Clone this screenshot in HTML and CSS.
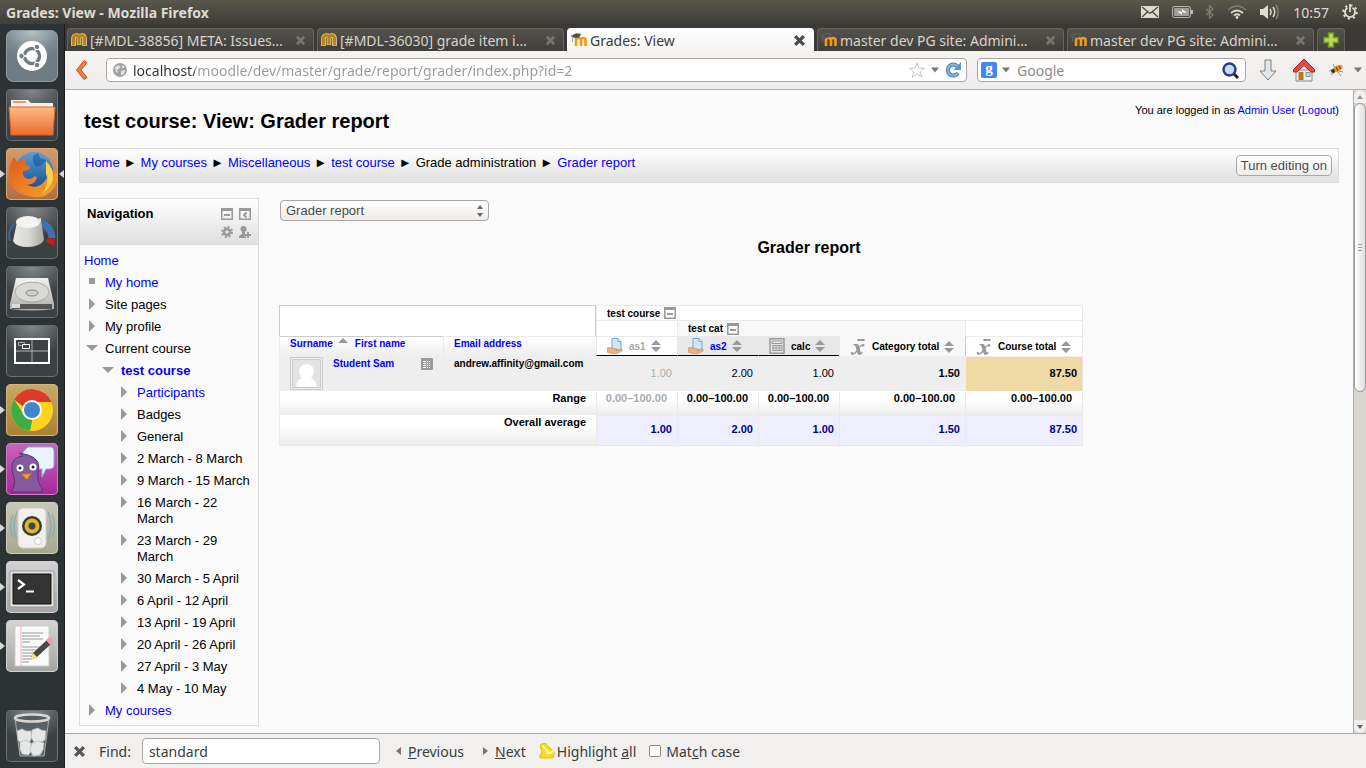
FILE: index.html
```html
<!DOCTYPE html>
<html lang="en">
<head>
  <meta charset="UTF-8" />
  <meta name="viewport" content="width=device-width, initial-scale=1.0" />
  <title>Grades: View</title>
  <link rel="stylesheet" href="styles.css">
</head>
<body>
  <!-- shared icons -->
  <svg class="defs" aria-hidden="true">
    <defs>
      <linearGradient id="gOrange" x1="0" y1="0" x2="0" y2="1"><stop offset="0" stop-color="#f9bd85"/><stop offset="1" stop-color="#ea6a2c"/></linearGradient>
      <linearGradient id="gBlue" x1="0" y1="0" x2="0" y2="1"><stop offset="0" stop-color="#5aa0da"/><stop offset="1" stop-color="#164a8c"/></linearGradient>
      <linearGradient id="gGrey" x1="0" y1="0" x2="0" y2="1"><stop offset="0" stop-color="#f2f2f0"/><stop offset="1" stop-color="#aaaaa8"/></linearGradient>
      <linearGradient id="gKnob" x1="0" y1="0" x2="1" y2="0"><stop offset="0" stop-color="#e8e8e2"/><stop offset=".5" stop-color="#d8d9d2"/><stop offset="1" stop-color="#a8aaa2"/></linearGradient>
      <linearGradient id="gFire" x1="0" y1="0" x2="1" y2="1"><stop offset="0" stop-color="#e2591c"/><stop offset="1" stop-color="#f4a52c"/></linearGradient>
      <symbol id="close" viewBox="0 0 12 12"><path d="M2 2l8 8M10 2l-8 8" stroke="currentColor" stroke-width="3" fill="none"/></symbol>
      <symbol id="moodle-old" viewBox="0 0 16 14"><path d="M2.500 13V5.500Q2.500 2.500 5.200 2.500T8 5.500V12M8 5.500Q8 2.500 10.700 2.500T13.500 5.500V13" fill="none" stroke="#f3cfa6" stroke-width="4.600"/><path d="M2.500 12.500V5.500Q2.500 2.500 5.200 2.500T8 5.500V11.500M8 5.500Q8 2.500 10.700 2.500T13.500 5.500V12.500" fill="none" stroke="#b8860b" stroke-width="3"/></symbol>
      <symbol id="moodle" viewBox="0 0 16 14"><path d="M5 13V7q0-2 2.300-2T10 7v6M10 7q0-2 2.300-2T14.500 7v6" fill="none" stroke="#f59b11" stroke-width="2.600"/><path d="M0 3l5-2.500 5 .5-2 3.500-4 .5zM1.500 4v5" fill="#4c4c4c" stroke="#777" stroke-width=".6"/></symbol>
      <symbol id="collapsed" viewBox="0 0 8 12"><path d="M1 0l6 6-6 6z" fill="#999"/></symbol>
      <symbol id="expanded" viewBox="0 0 12 8"><path d="M0 1h12L6 7z" fill="#999"/></symbol>
      <symbol id="minus" viewBox="0 0 12 12"><path d="M.75 1.500h10.500v9.750H.75z" fill="none" stroke="#999" stroke-width="1.500"/><path d="M0 0h12v3H0zM3 6h6v2H3z" fill="#999"/></symbol>
      <symbol id="dock" viewBox="0 0 12 12"><path d="M.75 1.500h10.500v9.750H.75z" fill="none" stroke="#999" stroke-width="1.500"/><path d="M0 0h12v3H0z" fill="#999"/><path d="M7.500 4.500L5 7l2.500 2.500" fill="none" stroke="#999" stroke-width="1.800"/></symbol>
      <symbol id="sort" viewBox="0 0 10 12"><path d="M5 0l5 5H0zM0 7h10l-5 5z" fill="#999"/></symbol>
      <symbol id="assign" viewBox="0 0 16 16"><path d="M5 .5h6l3 3V12H5z" fill="#cfe6fb" stroke="#6fa8dc"/><path d="M11 .5v3h3" fill="#fff" stroke="#6fa8dc"/><path d="M0 10q3-1 5 0l5 1q1 1-1 1.500l5-1.500q2 0 1 2l-5 2.500H5L0 14z" fill="#e9b184" stroke="#c98a56" stroke-width=".6"/></symbol>
      <symbol id="calc" viewBox="0 0 16 16"><path d="M1 .75h14v14.500H1z" fill="none" stroke="#999" stroke-width="1.500"/><path d="M3 3h10v2.500H3z" fill="none" stroke="#999"/><path d="M3 7.500h10M3 10h10M3 12.500h10M4 7v6M7 7v6M10 7v6M13 7v6" stroke="#999"/></symbol>
      <symbol id="mean" viewBox="0 0 15 16"><path d="M7 0h7v2H7z" fill="#999"/><path d="M3 5h3.500q1.500 0 2 2l1.500 5.500q.5 1.500 2 .5l.5.700Q10.500 16 9 16q-1.500 0-2-1.500L5 7.500Q4.500 6 3 6z" fill="#999"/><path d="M12.500 6.500q-2-1-4.500 3l-2 3Q3.500 16 1.500 14.500" fill="none" stroke="#999" stroke-width="1.300"/><circle cx="12.500" cy="6.300" r="1.400" fill="#999"/><circle cx="1.600" cy="14.400" r="1.400" fill="#999"/></symbol>
    </defs>
  </svg>

  <header class="panel">
    <span class="window-title">Grades: View - Mozilla Firefox</span>
    <div class="indicators">
      <svg class="i-mail" viewBox="0 0 18 12"><path d="M0 0h18v12H0z" fill="#dfdbd2"/><path d="M1 1l8 6.500L17 1M1 11l5.500-5M17 11l-5.500-5" fill="none" stroke="#45433d" stroke-width="1.200"/></svg>
      <svg class="i-battery" viewBox="0 0 21 12"><rect x=".5" y=".5" width="18" height="11" rx="2" fill="none" stroke="#bdb9b0"/><path d="M2 2h15v8H2z" fill="#a09d96"/><path d="M19 4h2v4h-2z" fill="#bdb9b0"/><path d="M5 5l5 1V3l5 4-5-1v3z" fill="#fff"/></svg>
      <svg class="i-bluetooth" viewBox="0 0 8 14"><path d="M0 4l7 6-3.500 3.500V.5L7 4 0 10" fill="none" stroke="#858178" stroke-width="1.200"/></svg>
      <svg class="i-wifi" viewBox="0 0 20 14"><path d="M1 5q9-8 18 0" fill="none" stroke="#858178" stroke-width="1.600"/><path d="M4 8q6-5 12 0M7 10.500q3-2.500 6 0" fill="none" stroke="#dfdbd2" stroke-width="1.700"/><circle cx="10" cy="12.500" r="1.400" fill="#dfdbd2"/></svg>
      <svg class="i-sound" viewBox="0 0 20 16"><path d="M0 5h3l5-4v14l-5-4H0z" fill="#dfdbd2"/><path d="M10 5q2 3 0 6M13 3q3.500 5 0 10" fill="none" stroke="#dfdbd2" stroke-width="1.500"/><path d="M16 1q4.500 7 0 14" fill="none" stroke="#858178" stroke-width="1.500"/></svg>
      <time>10:57</time>
      <svg class="i-gear" viewBox="0 0 16 16"><circle cx="8" cy="8" r="6.700" fill="none" stroke="#dfdbd2" stroke-width="2.200" stroke-dasharray="2.200 3.060"/><path d="M5.500 3.700a5 5 0 1 0 5 0" fill="none" stroke="#dfdbd2" stroke-width="1.800"/><path d="M8 0v8" stroke="#dfdbd2" stroke-width="1.800"/></svg>
    </div>
  </header>

  <div class="desktop">
    <nav class="launcher" aria-label="Launcher">
      <button class="app dash" aria-label="Dash"><svg viewBox="0 0 52 52"><circle cx="26" cy="26" r="15" fill="#fff"/><circle cx="26" cy="26" r="7.500" fill="none" stroke="#6d7d84" stroke-width="3.500"/><path d="M26 26l5-9M26 26l5 9M26 26H15" stroke="#fff" stroke-width="1.500"/><circle cx="26" cy="26" r="5.500" fill="#fff"/><g fill="#6d7d84" stroke="#fff"><circle cx="15.500" cy="26" r="2.700"/><circle cx="31" cy="17" r="2.700"/><circle cx="31" cy="35" r="2.700"/></g></svg></button>
      <button class="app" aria-label="Files"><svg viewBox="0 0 52 52"><path d="M5 11h17l3 3h22v8H5z" fill="#f3f1ee"/><path d="M7 12h13v2H7z" fill="#ef9966"/><path d="M3 18h46l-2 28H5z" fill="url(#gOrange)" stroke="#e25f22"/></svg></button>
      <button class="app firefox running active" aria-label="Firefox"><svg viewBox="0 0 52 52"><circle cx="28" cy="23" r="19" fill="url(#gBlue)"/><path d="M27 8l5-3 2 5 6 2-4 5-6 2-3-5z" fill="#1d5599" opacity=".6"/><path d="M8 9l3 5q5-3 10-4-2 3-2 6l5 3q-1 4-7 4-1 7 6 8 3 0 6-3 3 1 1 4-4 6-10 4 9 6 17-1 7-6 5-15l-1-6q6 7 7 13l1-8q5 12-1 21-8 11-20 9Q8 47 4 34 1 20 8 9z" fill="url(#gFire)"/><path d="M40 13q8 8 7 18-2 9-11 15 7-9 5-20l-1 3z" fill="#fad34e"/></svg></button>
      <button class="app" aria-label="Mixer"><svg viewBox="0 0 52 52"><path d="M8 17q-7 7-4 17" fill="none" stroke="#3a64a0" stroke-width="2"/><path d="M36 16q10 5 10 15" fill="none" stroke="#3f70b0" stroke-width="7"/><path d="M42 31l7 1-1 7-8-4z" fill="#d11a1a"/><path d="M11 15L7 34q3 6 15 6t16-7l-3-21-5 1z" fill="url(#gKnob)"/><ellipse cx="22" cy="15" rx="12" ry="6" fill="#f4f4f2"/><path d="M31 12l4-1v4l-3 1z" fill="#e4e4e0"/></svg></button>
      <button class="app" aria-label="Disk"><svg viewBox="0 0 52 52"><path d="M10 12h32l6 26v5q-22 3-44 0v-5z" fill="url(#gGrey)"/><path d="M6 38h40v5H6z" fill="#555"/><path d="M6 38h8v4H6z" fill="#ddd"/><ellipse cx="26" cy="26" rx="17" ry="10" fill="#d8d8d6" stroke="#aaa"/><ellipse cx="26" cy="27" rx="6" ry="3" fill="#ccc" stroke="#888"/><path d="M12 18q11-5 17-3" fill="none" stroke="#fff"/></svg></button>
      <button class="app" aria-label="Workspaces"><svg viewBox="0 0 52 52"><path d="M9 14h34v24H9z" fill="#3c4143" stroke="#fff" stroke-width="2"/><path d="M26 15v22M10 26h32" stroke="#b0b0b0"/><path d="M12.500 17.500h6v3h-6z" fill="none" stroke="#aaa"/><path d="M16.500 19.500h7v4h-7z" fill="#3c4143" stroke="#fff"/></svg></button>
      <button class="app chrome running" aria-label="Chrome"><svg viewBox="0 0 52 52"><circle cx="26" cy="26" r="21" fill="#ffd21c"/><path d="M8 15.500A21 21 0 0 1 45.500 18H26a9 9 0 0 0-8 5z" fill="#dd3a2c"/><path d="M8 15.500L18 31q3 4.500 8.500 4L24 47A21 21 0 0 1 8 15.500z" fill="#3cae48"/><circle cx="26" cy="26" r="10" fill="#fff"/><circle cx="26" cy="26" r="8" fill="#3f86cb"/></svg></button>
      <button class="app pidgin running" aria-label="Pidgin"><svg viewBox="0 0 52 52"><path d="M22 4h23q3 0 3 4v14q0 4-5 4h-3l-4 8v-8H20q-3-1-3-5V9z" fill="#e9f3fb" stroke="#8ab0d0"/><path d="M5 49q5-7 3-14-7-20 9-22l-4-3 9 2q14 4 10 18-1 9 4 15 1 4-1 4z" fill="#84599d" stroke="#5a3274"/><circle cx="14" cy="25" r="3.500" fill="#fff"/><circle cx="27" cy="24" r="3.500" fill="#fff"/><circle cx="14" cy="25" r="1.500" fill="#222"/><circle cx="27" cy="24" r="1.500" fill="#222"/><path d="M15 31l11-1-5 7z" fill="#ee9a26" stroke="#b4641c"/></svg></button>
      <button class="app rhythmbox running" aria-label="Rhythmbox"><svg viewBox="0 0 52 52"><g fill="none" stroke="#8fa9b4" stroke-width="1.500"><path d="M11 10q-6 14 0 28M7 13q-5 11 0 22M42 10q6 14 0 28M46 13q5 11 0 22"/></g><rect x="12" y="6" width="28" height="40" rx="5" fill="#f0f0ee" stroke="#cfcfca"/><circle cx="26" cy="24" r="10" fill="#3a3a34"/><circle cx="26" cy="24" r="7.500" fill="#dcb921"/><circle cx="26" cy="24" r="3.500" fill="#3f474a"/><circle cx="32" cy="39" r="3.500" fill="#fff" stroke="#ccc"/></svg></button>
      <button class="app light running" aria-label="Terminal"><svg viewBox="0 0 52 52"><path d="M4 10h44v36H4z" fill="#e4e4e4" stroke="#999"/><path d="M7 13h38v30H7z" fill="#333" stroke="#111"/><path d="M12 19l6 4.500-6 4.500M20 30.500h8" fill="none" stroke="#fff" stroke-width="2.200"/></svg></button>
      <button class="app light running" aria-label="Text editor"><svg viewBox="0 0 52 52"><path d="M9 6h34v40H9z" fill="#fafafa" stroke="#ccc"/><path d="M15 6v40" stroke="#f0b4b4"/><path d="M16 13h21M16 16h18M16 19h21M16 22h8M16 27h21M16 30h19M16 33h12M16 36h12M16 39h8M16 42h7" stroke="#999"/><path d="M24 40l3-7 14-13 4 4-14 13z" fill="#484848"/><path d="M24 40l3-7 4 4z" fill="#f1e48c"/><path d="M40 20l3-3q4 0 4 5l-3 3z" fill="#ef9bb4"/></svg></button>
      <button class="app trash" aria-label="Trash"><svg viewBox="0 0 52 52"><path d="M9 8l5 38h24l5-38" fill="#5a6265" stroke="#a9adae"/><g fill="#e6e7e5" stroke="#b8bbb9" stroke-width=".8"><path d="M11 21l5-2 4 2 5 0 1 6-3 6-7 1-4-4z"/><path d="M26 20l6-2 3 2 5 1-1 9-5 3-6-1-3-5z"/><path d="M14 32l6-2 5 3 1 8-4 4-6-1-2-5z"/><path d="M26 33l6-2 6 2-1 7-3 5-7 1-3-6z"/></g><ellipse cx="26" cy="8" rx="17" ry="3.500" fill="#555c5e" stroke="#d7d8d6" stroke-width="2.500"/></svg></button>
    </nav>

    <div class="browser">
      <div class="tabs" role="tablist">
        <div class="tab"><svg class="favicon"><use href="#moodle-old"/></svg><span class="tab-label">[#MDL-38856] META: Issues…</span><button class="tab-close" aria-label="Close tab"><svg><use href="#close"/></svg></button></div>
        <div class="tab"><svg class="favicon"><use href="#moodle-old"/></svg><span class="tab-label">[#MDL-36030] grade item i…</span><button class="tab-close" aria-label="Close tab"><svg><use href="#close"/></svg></button></div>
        <div class="tab selected"><svg class="favicon"><use href="#moodle"/></svg><span class="tab-label">Grades: View</span><button class="tab-close" aria-label="Close tab"><svg><use href="#close"/></svg></button></div>
        <div class="tab"><svg class="favicon"><use href="#moodle"/></svg><span class="tab-label">master dev PG site: Admini…</span><button class="tab-close" aria-label="Close tab"><svg><use href="#close"/></svg></button></div>
        <div class="tab"><svg class="favicon"><use href="#moodle"/></svg><span class="tab-label">master dev PG site: Admini…</span><button class="tab-close" aria-label="Close tab"><svg><use href="#close"/></svg></button></div>
        <button class="tab new-tab" aria-label="New tab"><svg viewBox="0 0 16 16"><path d="M5.500 1h5v4.500H15v5h-4.500V15h-5v-4.500H1v-5h4.500z" fill="#b5d957" stroke="#6f9a20" stroke-width="1.400"/></svg></button>
      </div>

      <div class="toolbar">
        <button class="tool back" aria-label="Back"><svg viewBox="0 0 14 22"><path d="M9 1.500l3 2L6 11l6 7.500-3 2L1.500 11z" fill="#ef7d42" stroke="#c8501e"/></svg></button>
        <div class="field url">
          <svg class="globe" viewBox="0 0 14 14"><circle cx="7" cy="7" r="7" fill="#a3a3a3"/><path d="M2 4l4-2 1 3-3 2 1 3-2-1zM8 8l4-1-1 4-3 1zM9 2l3 2-3 1z" fill="#e6e6e6"/></svg>
          <input type="text" aria-label="Address" value="localhost/moodle/dev/master/grade/report/grader/index.php?id=2">
          <svg class="star" viewBox="0 0 16 16"><path d="M8 1l2 5 5.500.3-4.200 3.400L12.700 15 8 12l-4.700 3 1.400-5.300L.5 6.300 6 6z" fill="#fff" stroke="#c4c4c4"/></svg>
          <svg class="caret" viewBox="0 0 8 6"><path d="M0 .5h8l-4 5z" fill="#777"/></svg>
          <svg class="reload" viewBox="0 0 16 16"><path d="M12.500 4.500A5.500 5.500 0 1 0 13 11" fill="none" stroke="#4481bd" stroke-width="4"/><path d="M12.500 4.500A5.500 5.500 0 1 0 13 11" fill="none" stroke="#84b6e2" stroke-width="2"/><path d="M16 0v8H8.500z" fill="#5b95cc"/></svg>
        </div>
        <div class="field search">
          <span class="engine">g</span>
          <svg class="caret" viewBox="0 0 8 6"><path d="M0 .5h8l-4 5z" fill="#777"/></svg>
          <input type="text" aria-label="Search" placeholder="Google">
          <svg class="lens" viewBox="0 0 17 17"><path d="M11 11l5 5" stroke="#222" stroke-width="3"/><circle cx="7.500" cy="7.500" r="6" fill="#c8d8f2" stroke="#243a80" stroke-width="2.400"/></svg>
        </div>
        <button class="tool download" aria-label="Downloads"><svg viewBox="0 0 18 22"><path d="M6 1h6v11h5l-8 9-8-9h5z" fill="#e3e6e8" stroke="#777c80"/></svg></button>
        <button class="tool home" aria-label="Home page"><svg viewBox="0 0 22 24"><path d="M3 12h16v11H3z" fill="#eee" stroke="#888"/><path d="M5.500 14h5v8h-5z" fill="#b97a10"/><path d="M13 14.500h4v4h-4z" fill="#cde" stroke="#888"/><path d="M11 1l10.500 10.500V14H18l-7-6.500L4 14H.5v-2.500z" fill="#dc4c4c" stroke="#a82424"/></svg></button>
        <button class="tool bug" aria-label="Firebug"><svg viewBox="0 0 16 14"><path d="M1 8l4-1M3 12l4-3M10 9l3 4M10 8l5 1M5 1l2 4" stroke="#8d7a50" stroke-width=".8"/><ellipse cx="9.500" cy="5.500" rx="5.500" ry="3" transform="rotate(-25 9.500 5.500)" fill="#f09a1c"/><circle cx="5" cy="8" r="2" fill="#333"/><path d="M8 4l2 4M11 3l1.500 3" stroke="#b1300e" stroke-width="1.400"/></svg></button>
        <svg class="caret" viewBox="0 0 8 6"><path d="M0 .5h8l-4 5z" fill="#777"/></svg>
      </div>

      <div class="viewport">
        <main class="page">
          <div class="page-header">
            <h1>test course: View: Grader report</h1>
            <p class="logininfo">You are logged in as <a href="#">Admin User</a> (<a href="#">Logout</a>)</p>
          </div>
          <div class="navbar">
            <nav class="breadcrumb" aria-label="Breadcrumb">
              <a href="#">Home</a><i>►</i><a href="#">My courses</a><i>►</i><a href="#">Miscellaneous</a><i>►</i><a href="#">test course</a><i>►</i><span>Grade administration</span><i>►</i><a href="#">Grader report</a>
            </nav>
            <button class="btn">Turn editing on</button>
          </div>

          <div class="columns">
            <aside class="block">
              <div class="block-header">
                <h2>Navigation</h2>
                <div class="block-actions">
                  <svg><use href="#minus"/></svg>
                  <svg><use href="#dock"/></svg>
                  <svg viewBox="0 0 12 12"><circle cx="6" cy="6" r="3" fill="none" stroke="#999" stroke-width="2.500"/><circle cx="6" cy="6" r="5" fill="none" stroke="#999" stroke-width="2" stroke-dasharray="2 1.927"/></svg>
                  <svg viewBox="0 0 12 12"><circle cx="4.500" cy="3" r="3" fill="#999"/><path d="M3 5h3v3l1 1v3H0v-2l3-2z" fill="#999"/><path d="M9 6v6M6 9h6" stroke="#e2e2e2" stroke-width="3"/><path d="M9 6v6M6 9h6" stroke="#999" stroke-width="1.800"/></svg>
                </div>
              </div>
              <ul class="tree">
                <li><a href="#">Home</a></li>
                <li class="l1"><svg class="square" viewBox="0 0 6 6"><path d="M0 0h6v6H0z" fill="#999"/></svg><a href="#">My home</a></li>
                <li class="l1"><svg class="arrow"><use href="#collapsed"/></svg><span>Site pages</span></li>
                <li class="l1"><svg class="arrow"><use href="#collapsed"/></svg><span>My profile</span></li>
                <li class="l1"><svg class="arrow open"><use href="#expanded"/></svg><span>Current course</span></li>
                <li class="l2"><svg class="arrow open"><use href="#expanded"/></svg><a href="#"><b>test course</b></a></li>
                <li class="l3"><svg class="arrow"><use href="#collapsed"/></svg><a href="#">Participants</a></li>
                <li class="l3"><svg class="arrow"><use href="#collapsed"/></svg><span>Badges</span></li>
                <li class="l3"><svg class="arrow"><use href="#collapsed"/></svg><span>General</span></li>
                <li class="l3"><svg class="arrow"><use href="#collapsed"/></svg><span>2 March - 8 March</span></li>
                <li class="l3"><svg class="arrow"><use href="#collapsed"/></svg><span>9 March - 15 March</span></li>
                <li class="l3"><svg class="arrow"><use href="#collapsed"/></svg><span>16 March - 22 March</span></li>
                <li class="l3"><svg class="arrow"><use href="#collapsed"/></svg><span>23 March - 29 March</span></li>
                <li class="l3"><svg class="arrow"><use href="#collapsed"/></svg><span>30 March - 5 April</span></li>
                <li class="l3"><svg class="arrow"><use href="#collapsed"/></svg><span>6 April - 12 April</span></li>
                <li class="l3"><svg class="arrow"><use href="#collapsed"/></svg><span>13 April - 19 April</span></li>
                <li class="l3"><svg class="arrow"><use href="#collapsed"/></svg><span>20 April - 26 April</span></li>
                <li class="l3"><svg class="arrow"><use href="#collapsed"/></svg><span>27 April - 3 May</span></li>
                <li class="l3"><svg class="arrow"><use href="#collapsed"/></svg><span>4 May - 10 May</span></li>
                <li class="l1"><svg class="arrow"><use href="#collapsed"/></svg><a href="#">My courses</a></li>
              </ul>
            </aside>

            <section class="report">
              <div class="select">
                <select aria-label="Report type"><option>Grader report</option></select>
                <svg viewBox="0 0 6 12"><path d="M3 0l3 4H0zM0 8h6l-3 4z" fill="#666"/></svg>
              </div>
              <h2>Grader report</h2>
              <table class="grades">
                <colgroup>
                  <col class="c-user"><col class="c-email"><col class="c-item"><col class="c-item"><col class="c-item"><col class="c-cat"><col class="c-total">
                </colgroup>
                <thead>
                  <tr class="r-course">
                    <td class="corner" colspan="2" rowspan="2"></td>
                    <th class="topic" colspan="5"><div class="cell">test course <svg class="toggle"><use href="#minus"/></svg></div></th>
                  </tr>
                  <tr class="r-cat">
                    <td></td>
                    <th class="topic shade" colspan="3"><div class="cell">test cat <svg class="toggle"><use href="#minus"/></svg></div></th>
                    <td></td>
                  </tr>
                  <tr class="r-items">
                    <th class="fade first"><div class="cell"><a href="#">Surname</a><svg class="asc" viewBox="0 0 10 5"><path d="M5 0l5 5H0z" fill="#999"/></svg><a href="#">First name</a></div></th>
                    <th class="fade"><div class="cell"><a href="#">Email address</a></div></th>
                    <th class="item dim"><div class="cell"><svg class="type"><use href="#assign"/></svg>as1<svg class="sort"><use href="#sort"/></svg></div></th>
                    <th class="item dark"><div class="cell"><svg class="type"><use href="#assign"/></svg><a href="#">as2</a><svg class="sort"><use href="#sort"/></svg></div></th>
                    <th class="item dark"><div class="cell"><svg class="type"><use href="#calc"/></svg>calc<svg class="sort"><use href="#sort"/></svg></div></th>
                    <th class="shade"><div class="cell"><svg class="type"><use href="#mean"/></svg>Category total<svg class="sort"><use href="#sort"/></svg></div></th>
                    <th class="total"><div class="cell"><svg class="type"><use href="#mean"/></svg>Course total<svg class="sort"><use href="#sort"/></svg></div></th>
                  </tr>
                </thead>
                <tbody>
                  <tr class="r-user">
                    <th><div class="cell user"><svg class="avatar" viewBox="0 0 33 33"><path d="M.5.5h32v32H.5z" fill="#eee" stroke="#ccc"/><path d="M2.500 2.500h28v28h-28z" fill="#e3e3e3" stroke="#ccc"/><path d="M6 30q1-7 6-9-3-3-3-7 1-7 7.500-7T24 14q0 4-3 7 5 2 6 9z" fill="#fff"/></svg><a href="#">Student Sam</a><svg class="sheet" viewBox="0 0 12 12"><rect width="12" height="12" rx="1" fill="#999"/><path d="M2 3.500h8M2 5.500h8M2 7.500h8M2 9.500h8" stroke="#fff" stroke-dasharray="3 1 1 1 1 1"/></svg></div></th>
                    <th><div class="cell email">andrew.affinity@gmail.com</div></th>
                    <td class="num dim">1.00</td>
                    <td class="num">2.00</td>
                    <td class="num">1.00</td>
                    <td class="num strong">1.50</td>
                    <td class="num strong gold">87.50</td>
                  </tr>
                  <tr class="r-range">
                    <th class="label" colspan="2">Range</th>
                    <td class="dim">0.00–100.00</td>
                    <td>0.00–100.00</td>
                    <td>0.00–100.00</td>
                    <td>0.00–100.00</td>
                    <td>0.00–100.00</td>
                  </tr>
                  <tr class="r-avg">
                    <th class="label" colspan="2">Overall average</th>
                    <td class="num">1.00</td>
                    <td class="num">2.00</td>
                    <td class="num">1.00</td>
                    <td class="num">1.50</td>
                    <td class="num">87.50</td>
                  </tr>
                </tbody>
              </table>
            </section>
          </div>
        </main>
        <div class="scrollbar">
          <div class="step"><svg viewBox="0 0 6 4"><path d="M3 0l3 4H0z" fill="#999"/></svg></div>
          <div class="thumb"><i></i><i></i><i></i></div>
          <div class="step down"><svg viewBox="0 0 6 4"><path d="M0 0h6L3 4z" fill="#666"/></svg></div>
        </div>
      </div>

      <form class="findbar">
        <button type="button" class="find-close" aria-label="Close find bar"><svg><use href="#close"/></svg></button>
        <label for="find">Find:</label>
        <input type="text" id="find" value="standard">
        <button type="button" class="prev"><svg viewBox="0 0 5 8"><path d="M5 0v8L0 4z" fill="#777"/></svg><span><u>P</u>revious</span></button>
        <button type="button" class="next"><svg viewBox="0 0 5 8"><path d="M0 0v8l5-4z" fill="#777"/></svg><span><u>N</u>ext</span></button>
        <button type="button" class="highlight"><svg viewBox="0 0 16 16"><path d="M1 3q0-2 2-2l3-1 8 8q2 2 1 4l-1 3H2q-2 0-1-2l2-4z" fill="#f7dc1c" stroke="#e0bd10"/><path d="M3.500 2.500l7 8M7 10q4 1 7-2" fill="none" stroke="#fffbd0" stroke-width="1.800"/></svg><span>Highlight <u>a</u>ll</span></button>
        <input type="checkbox" id="matchcase">
        <label for="matchcase">Mat<u>c</u>h case</label>
      </form>
    </div>
  </div>
</body>
</html>
```
FILE: styles.css
```css
* {
  box-sizing: border-box;
}
body {
  margin: 0;
  height: 100vh;
  display: flex;
  flex-direction: column;
  overflow: hidden;
  font-family: "Noto Sans", sans-serif;
  font-size: 14px;
  color: #3c3c3c;
}
svg {
  display: block;
  flex: none;
}
button {
  padding: 0;
  border: 0;
  background: none;
  font: inherit;
  color: inherit;
}
input {
  font: inherit;
}
.defs {
  position: absolute;
  width: 0;
  height: 0;
}

/* top panel */
.panel {
  flex: none;
  height: 24px;
  display: flex;
  align-items: center;
  justify-content: space-between;
  padding: 0 8px 0 6px;
  background: linear-gradient(#59564b, #3e3d39);
  color: #dfdbd2;
}
.window-title {
  font-weight: bold;
}
.indicators {
  display: flex;
  align-items: center;
  gap: 13px;
}
.i-mail { width: 18px; height: 12px; }
.i-battery { width: 21px; height: 12px; }
.i-bluetooth { width: 8px; height: 14px; }
.i-wifi { width: 20px; height: 14px; }
.i-sound { width: 20px; height: 16px; }
.i-gear { width: 16px; height: 16px; }

.desktop {
  flex: 1;
  min-height: 0;
  display: flex;
}

/* launcher */
.launcher {
  flex: none;
  width: 65px;
  display: flex;
  flex-direction: column;
  gap: 7px;
  padding: 6px;
  background: #2d3335;
  border-right: 1px solid #1b1d1e;
}
.app {
  position: relative;
  flex: none;
  width: 52px;
  height: 52px;
  border-radius: 5px;
  background: radial-gradient(40px 30px at 50% 0, #858a8c, #565b5d 60%, #3c4143);
  box-shadow: inset 0 0 0 1px #6a6f71;
}
.app svg {
  width: 52px;
  height: 52px;
}
.dash {
  border-radius: 8px;
  background: radial-gradient(40px 30px at 50% 0, #b9c3c7, #7b8a90 70%, #6d7c83);
  box-shadow: inset 0 0 0 1px #8d999d;
}
.firefox {
  background: linear-gradient(#d29c72, #ae6d40);
  box-shadow: inset 0 0 0 1px #d8a57e;
}
.chrome {
  background: linear-gradient(#c9aa6b, #a97f33);
  box-shadow: inset 0 0 0 1px #cfb67f;
}
.pidgin {
  background: linear-gradient(#c667b9, #a4289a);
  box-shadow: inset 0 0 0 1px #d27cc8;
}
.rhythmbox {
  background: linear-gradient(#c6c8b4, #a6a88e);
  box-shadow: inset 0 0 0 1px #cdcfbc;
}
.light {
  background: linear-gradient(#d4d4d4, #a4a4a4);
  box-shadow: inset 0 0 0 1px #d0d0d0;
}
.trash {
  margin-top: auto;
}
.running::before {
  content: "";
  position: absolute;
  left: -6px;
  top: 22px;
  border: 4px solid transparent;
  border-left: 5px solid #d8d8d8;
  border-right: 0;
}
.active::after {
  content: "";
  position: absolute;
  right: -6px;
  top: 22px;
  border: 4px solid transparent;
  border-right: 5px solid #d8d8d8;
  border-left: 0;
}

/* browser chrome */
.browser {
  flex: 1;
  min-width: 0;
  display: flex;
  flex-direction: column;
}
.tabs {
  flex: none;
  height: 27px;
  display: flex;
  gap: 3px;
  padding: 4px 2px 0;
  background: #3a3935;
}
.tab {
  flex: 0 1 247px;
  min-width: 0;
  display: flex;
  align-items: center;
  gap: 3px;
  padding: 0 7px 0 3px;
  border: 1px solid #65645f;
  border-bottom: 0;
  border-radius: 4px 4px 0 0;
  background: linear-gradient(#53524d, #3f3e3a);
  color: #d8d4cb;
}
.tab.selected {
  background: linear-gradient(#fff, #f4f3f2);
  border-color: #fff;
  color: #3c3c3c;
}
.favicon {
  width: 16px;
  height: 14px;
}
.tab-label {
  flex: 1;
  white-space: nowrap;
  overflow: hidden;
}
.tab-close {
  color: #77756f;
}
.tab-close svg {
  width: 11px;
  height: 11px;
}
.selected .tab-close {
  color: #4a4a4a;
}
.selected .tab-close svg {
  width: 13px;
  height: 13px;
}
.new-tab {
  flex: 0 0 28px;
  justify-content: center;
  padding: 0;
}
.new-tab svg {
  width: 16px;
  height: 16px;
}
.toolbar {
  flex: none;
  height: 39px;
  display: flex;
  align-items: center;
  padding: 0 4px 0 10px;
  background: linear-gradient(#f4f3f2, #efedeb);
  border-bottom: 1px solid #b4b1ac;
}
.field {
  height: 24px;
  display: flex;
  align-items: center;
  gap: 6px;
  padding: 0 6px;
  border: 1px solid #aaa7a2;
  border-radius: 4px;
  background: #fff;
}
.field input {
  flex: 1;
  min-width: 0;
  height: 22px;
  padding: 0;
  border: 0;
  outline: 0;
  background: none;
}
.field input::placeholder {
  color: #8c8c8c;
}
.url {
  flex: 1;
  margin: 0 10px 0 17px;
  padding-right: 5px;
}
/* host name is darker than the path */
.url input {
  background: linear-gradient(to right, #333 62px, #999 62px);
  -webkit-background-clip: text;
  background-clip: text;
  -webkit-text-fill-color: transparent;
}
.search {
  flex: 0 1 269px;
  padding-left: 3px;
  gap: 5px;
}
.search input {
  margin-left: 2px;
}
.engine {
  width: 16px;
  height: 16px;
  border-radius: 2px;
  background: #4285f4;
  color: #fff;
  font: bold 15px/12px "Liberation Serif", serif;
  text-align: center;
}
.globe { width: 14px; height: 14px; }
.star, .reload { width: 16px; height: 16px; }
.caret { width: 8px; height: 6px; }
.lens { width: 17px; height: 17px; }
.back svg { width: 14px; height: 22px; }
.download svg { width: 18px; height: 22px; }
.home svg { width: 22px; height: 24px; }
.bug svg { width: 16px; height: 14px; }
.download { margin-left: 13px; }
.home { margin-left: 16px; }
.bug { margin: 0 10px 0 13px; }

/* page */
.viewport {
  flex: 1;
  min-height: 0;
  display: flex;
  background: #fafafa;
}
.page {
  flex: 1;
  min-width: 0;
  overflow: hidden;
  padding: 0 14px;
  font: 13px/16px "Liberation Sans", Arial, sans-serif;
  color: #000;
}
.page a {
  color: #00f;
  text-decoration: none;
}
.page-header {
  height: 58px;
  display: flex;
  justify-content: space-between;
  padding-left: 5px;
}
.page-header h1 {
  margin: 19px 0 0;
  font-size: 20px;
  line-height: 24px;
}
.logininfo {
  margin: 12px 0 0;
  font-size: 11px;
}
.navbar {
  display: flex;
  justify-content: space-between;
  align-items: flex-start;
  height: 35px;
  padding: 6px 6px 0 5px;
  border: 1px solid #ddd;
  background: linear-gradient(#fff, #e0e0e0);
}
.breadcrumb i {
  margin: 0 4px;
  font-style: normal;
}
.btn {
  height: 21px;
  padding: 0 4px;
  border: 1px solid #aaa7a2;
  border-radius: 4px;
  background: linear-gradient(#fff, #eeecea);
  color: #4c4c4c;
}
.columns {
  display: flex;
  align-items: flex-start;
  gap: 20px;
  margin-top: 15px;
}
.block {
  flex: none;
  width: 180px;
  border: 1px solid #ddd;
}
.block-header {
  display: flex;
  justify-content: space-between;
  height: 46px;
  padding: 7px 7px 0;
  background: linear-gradient(#fff, #dedede);
}
.block-header h2 {
  margin: 0;
  font-size: 13px;
}
.block-actions {
  display: grid;
  grid-template-columns: 12px 12px;
  grid-auto-rows: 12px;
  gap: 6px;
  padding-top: 2px;
}
.block-actions svg {
  width: 12px;
  height: 12px;
}
.tree {
  list-style: none;
  margin: 0;
  padding: 5px 4px 3px;
}
.tree li {
  display: flex;
  padding: 3px 0;
}
.tree .l1 { padding-left: 4px; }
.tree .l2 { padding-left: 20px; }
.tree .l3 { padding-left: 36px; }
.arrow {
  width: 8px;
  height: 12px;
  margin: 1px 9px 0 0;
}
.arrow.open {
  width: 12px;
  height: 8px;
  margin: 3px 7px 0 -2px;
}
.square {
  width: 6px;
  height: 6px;
  margin: 3px 10px 0 1px;
}
.report {
  flex: 1;
  min-width: 0;
}
.select {
  position: relative;
  width: 209px;
  margin: 2px 0 0 1px;
}
.select select {
  display: block;
  width: 100%;
  height: 21px;
  padding: 0 5px;
  appearance: none;
  border: 1px solid #aaa7a2;
  border-radius: 4px;
  background: linear-gradient(#fff, #eeecea);
  color: #4c4c4c;
  font: inherit;
}
.select svg {
  position: absolute;
  top: 5px;
  right: 6px;
  width: 6px;
  height: 12px;
}
.report h2 {
  margin: 17px 0 47px;
  font-size: 16px;
  line-height: 20px;
  text-align: center;
}

/* grade table */
.grades {
  table-layout: fixed;
  width: 804px;
  border-collapse: separate;
  border-spacing: 0;
  border-right: 1px solid #e8e8e8;
  border-bottom: 1px solid #e8e8e8;
  font-size: 11px;
  line-height: 13px;
}
.c-user { width: 164px; }
.c-email { width: 153px; }
.c-item { width: 81px; }
.c-cat { width: 126px; }
.c-total { width: 117px; }
.grades th,
.grades td {
  padding: 0;
  border-left: 1px solid #eaeaea;
  border-top: 1px solid #eaeaea;
  background: #fff;
  text-align: left;
}
.r-course { height: 15px; }
.r-cat { height: 16px; }
.r-items { height: 20px; }
.r-user { height: 35px; }
.r-range { height: 24px; }
.r-avg { height: 30px; }
.grades .corner {
  border-color: #ccc;
  border-right: 1px solid #ccc;
}
.grades .cell {
  display: flex;
  align-items: center;
  padding-left: 10px;
  font-size: 10px;
}
.topic .cell {
  gap: 4px;
}
.grades .shade {
  background: #f8f8f8;
}
.r-items .shade {
  border-top-color: #f8f8f8;
}
.toggle {
  width: 12px;
  height: 12px;
}
.grades .fade {
  background: linear-gradient(#fff, #eee);
  vertical-align: top;
}
.grades .first {
  border-top-color: #ccc;
}
.asc {
  width: 10px;
  height: 5px;
  margin: -6px 7px 0 5px;
}
.grades .item {
  border-bottom: 1px solid #000;
}
.grades .dark {
  background: #e8e8e8;
}
.grades .dim {
  color: #aaa;
}
.grades .total {
  border-left-color: #ccc;
}
.type {
  width: 16px;
  height: 16px;
  margin-right: 6px;
}
.sort {
  width: 10px;
  height: 12px;
  margin-left: 5px;
}
.grades .r-user th,
.grades .r-user td {
  border-color: #eee;
  background: #eee;
}
.grades .user {
  align-items: flex-start;
}
.avatar {
  width: 33px;
  height: 33px;
  margin-right: 10px;
}
.sheet {
  width: 12px;
  height: 12px;
  margin: 1px 10px 0 auto;
}
.grades .r-user th {
  vertical-align: top;
}
.grades .num {
  padding: 0 5px 2px 0;
  text-align: right;
}
.strong {
  font-weight: bold;
}
.grades .r-user .gold {
  background: #efd9a4;
}
.grades .label {
  padding: 0 10px 0 0;
  text-align: right;
  vertical-align: top;
}
.r-range {
  font-weight: bold;
}
.grades .r-range th,
.grades .r-range td,
.grades .r-avg th {
  background: linear-gradient(#fff 30%, #ececec);
  border-top-color: #fff;
}
.grades .r-range td {
  padding: 0 10px 0 0;
  text-align: right;
  vertical-align: top;
}
.grades .r-avg td {
  background: #eef;
  color: #00008b;
  font-weight: bold;
}

/* page scrollbar */
.scrollbar {
  flex: none;
  width: 13px;
  display: flex;
  flex-direction: column;
  background: #d9d6d2;
  border-left: 1px solid #b0ada8;
}
.step {
  height: 13px;
  display: grid;
  place-items: center;
  background: #f0efed;
  border-radius: 6px 6px 0 0;
}
.step.down {
  margin-top: auto;
  border-radius: 0 0 6px 6px;
}
.step svg {
  width: 6px;
  height: 4px;
}
.thumb {
  flex: 0 0 45%;
  display: flex;
  flex-direction: column;
  align-items: center;
  justify-content: center;
  gap: 2px;
  border: 1px solid #999;
  border-radius: 6px;
  background: linear-gradient(to right, #fff, #e2e0de);
}
.thumb i {
  width: 4px;
  height: 1px;
  background: #999;
}

/* find bar */
.findbar {
  flex: none;
  height: 35px;
  display: flex;
  align-items: center;
  padding-left: 8px;
  border-top: 1px solid #aaa7a2;
  background: #f1f0ee;
}
.findbar button {
  display: flex;
  align-items: center;
}
.find-close svg {
  width: 13px;
  height: 13px;
}
.find-close {
  margin-right: 13px;
  color: #555;
}
#find {
  width: 238px;
  height: 26px;
  margin: 0 16px 0 11px;
  padding: 0 6px;
  border: 1px solid #aaa7a2;
  border-radius: 4px;
  color: #3c3c3c;
}
.prev svg, .next svg {
  width: 5px;
  height: 8px;
  margin-right: 7px;
}
.prev {
  margin-right: 19px;
}
.highlight {
  margin: 0 13px 0 13px;
}
.highlight svg {
  width: 16px;
  height: 16px;
  margin-right: 2px;
}
#matchcase {
  appearance: none;
  width: 12px;
  height: 12px;
  margin: 0 5px 0 0;
  border: 1px solid #8c8983;
  border-radius: 2px;
  background: #fff;
}
```
